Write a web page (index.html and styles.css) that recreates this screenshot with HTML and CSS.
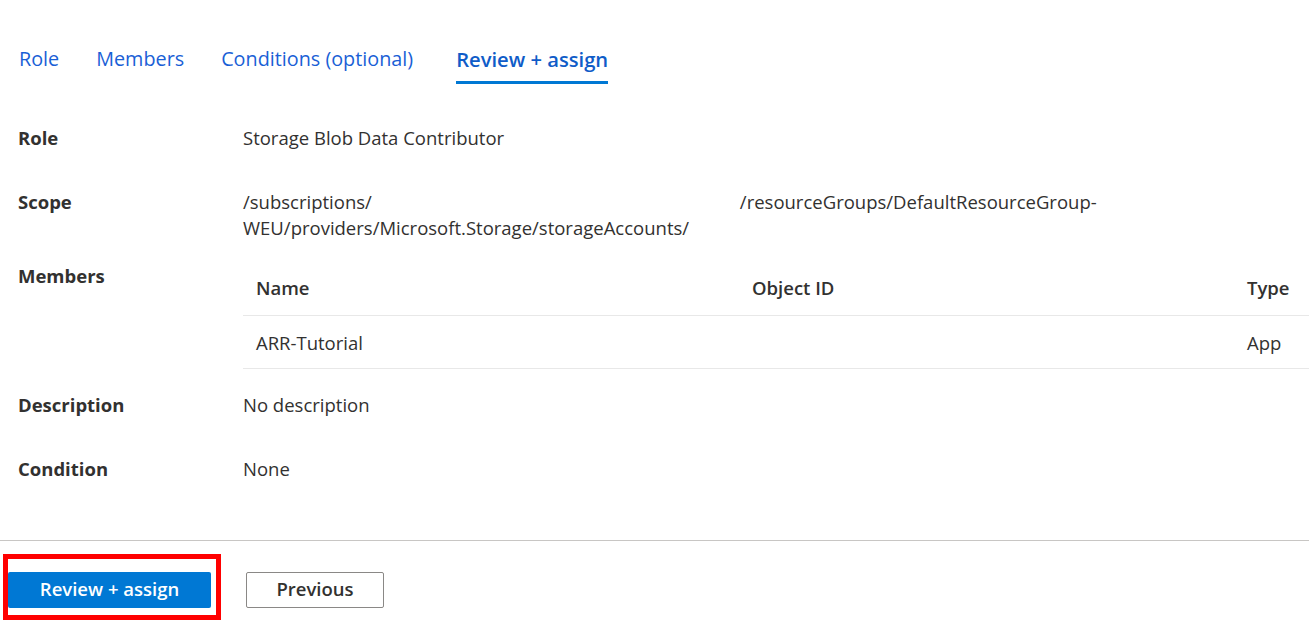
FILE: index.html
```html
<!DOCTYPE html>
<html>
<head>
<meta charset="utf-8">
<link rel="stylesheet" href="styles.css">
</head>
<body>
<div class="page">
  <nav class="tabs">
    <a class="tab">Role</a>
    <a class="tab">Members</a>
    <a class="tab">Conditions (optional)</a>
    <a class="tab active">Review + assign</a>
  </nav>
  <div class="details">
    <div class="row r-role">
      <div class="label">Role</div>
      <div class="value">Storage Blob Data Contributor</div>
    </div>
    <div class="row r-scope">
      <div class="label">Scope</div>
      <div class="value scope">/subscriptions/<span class="redact1"></span>/resourceGroups/DefaultResourceGroup-<br>WEU/providers/Microsoft.Storage/storageAccounts/</div>
    </div>
    <div class="row r-members">
      <div class="label">Members</div>
      <div class="value table-wrap">
        <div class="trow thead">
          <div class="c1">Name</div>
          <div class="c2">Object ID</div>
          <div class="c3">Type</div>
        </div>
        <div class="trow tbody">
          <div class="c1">ARR-Tutorial</div>
          <div class="c2"></div>
          <div class="c3">App</div>
        </div>
      </div>
    </div>
    <div class="row r-desc">
      <div class="label">Description</div>
      <div class="value">No description</div>
    </div>
    <div class="row r-cond">
      <div class="label">Condition</div>
      <div class="value">None</div>
    </div>
  </div>
  <footer class="footer">
    <div class="highlight">
      <button class="btn primary">Review + assign</button>
    </div>
    <button class="btn secondary">Previous</button>
  </footer>
</div>
</body>
</html>
```
FILE: styles.css
```css
* { box-sizing: border-box; }
html, body { margin: 0; padding: 0; background: #fff; }
body {
  font-family: "Open Sans", "Noto Sans", sans-serif;
  color: #323130;
  font-size: 18.5px;
  width: 1309px;
  height: 635px;
  overflow: hidden;
}
.page { display: flex; flex-direction: column; }
.tabs {
  display: flex;
  gap: 37px;
  padding: 44px 0 0 19px;
  height: 84px;
}
.tab {
  color: #1a5fd6;
  font-size: 19.8px;
  line-height: 30px;
  height: 40px;
  border-bottom: 3px solid transparent;
}
.tab.active {
  font-weight: 600;
  font-size: 20.2px;
  margin-left: 6px;
  color: #0f5cc8;
  border-bottom-color: #0078d4;
}
.details { display: flex; flex-direction: column; padding-left: 18px; }
.row { display: flex; }
.label { width: 225px; font-weight: 700; line-height: 26px; flex: none; }
.value { line-height: 26px; flex: 1; }
.r-role { margin-top: 41px; }
.r-scope { margin-top: 38px; }
.r-members { margin-top: 22px; }
.redact1 { display: inline-block; width: 368px; }
.table-wrap { display: flex; flex-direction: column; }
.trow { display: flex; border-bottom: 1px solid #e8e8e8; height: 53px; }
.thead { font-weight: 600; padding-top: 12px; }
.tbody { padding-top: 14px; }
.c1 { width: 509px; padding-left: 13px; }
.c2 { width: 495px; }
.c3 { flex: 1; }
.r-desc { margin-top: 23px; }
.r-cond { margin-top: 38px; }
.footer {
  margin-top: 58px;
  border-top: 1px solid #c8c6c4;
  display: flex;
  align-items: flex-start;
  padding: 13px 0 0 3px;
  gap: 25px;
}
.highlight {
  border: 5px solid #f00;
  padding: 13px 0 0 5px;
  width: 218px;
  height: 66px;
}
.btn {
  font-family: inherit;
  font-size: 18.5px;
  font-weight: 600;
  height: 36px;
  line-height: 32px;
  border-radius: 2px;
  padding: 0 0 2px;
  cursor: pointer;
}
.primary {
  width: 203px;
  margin-left: -5px;
  background: #0078d4;
  color: #fff;
  border: none;
}
.secondary {
  width: 138px;
  background: #fff;
  color: #323130;
  border: 1px solid #8a8886;
  margin-top: 18px;
}
```
